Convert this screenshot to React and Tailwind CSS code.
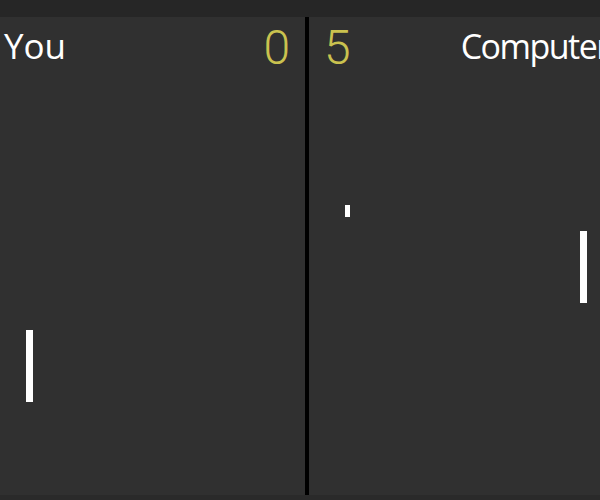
export default function App() {
  return (
    <div className="w-[600px] h-[500px] overflow-hidden bg-[#2a2a2a] flex flex-col">
      <div className="h-[17px] shrink-0 bg-[#262626]" />
      <div className="h-[478px] shrink-0 flex bg-[#303030] relative">
        <div className="w-[305px] shrink-0 relative flex items-start justify-between">
          <div className="mt-[11px] ml-[4px] text-white text-[35px] leading-none" style={{ fontFamily: '"Open Sans", sans-serif' }}>You</div>
          <div className="mt-[7px] mr-[15px] text-[#cac24f] text-[48px] leading-none font-light" style={{ fontFamily: 'Roboto, sans-serif' }}>0</div>
          <div className="absolute left-[26px] top-[313px] w-[7px] h-[72px] bg-white" />
        </div>
        <div className="w-[4px] shrink-0 bg-black" />
        <div className="flex-1 min-w-0 overflow-hidden relative flex items-start">
          <div className="mt-[7px] ml-[15px] shrink-0 text-[#cac24f] text-[48px] leading-none font-light" style={{ fontFamily: 'Roboto, sans-serif' }}>5</div>
          <div className="mt-[12px] ml-[110px] shrink-0 text-white text-[34px] leading-none whitespace-nowrap tracking-[-1.5px]" style={{ fontFamily: '"Open Sans", sans-serif' }}>Computer</div>
          <div className="absolute left-[36px] top-[188px] w-[5px] h-[12px] bg-white" />
          <div className="absolute left-[271px] top-[214px] w-[7px] h-[72px] bg-white" />
        </div>
      </div>
      <div className="flex-1 bg-[#2a2a2a]" />
    </div>
  );
}
